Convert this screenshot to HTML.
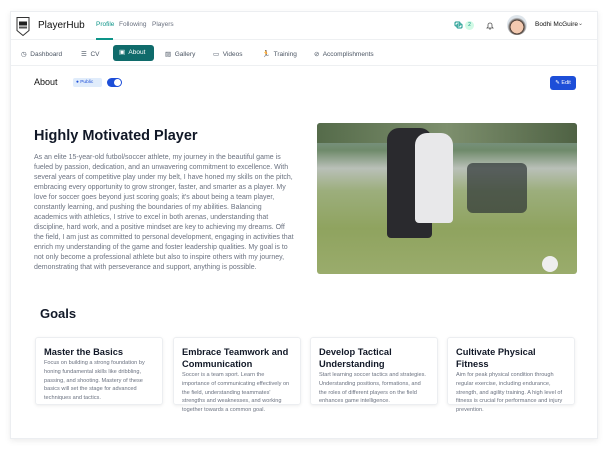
<!DOCTYPE html>
<html><head><meta charset="utf-8"><style>
*{box-sizing:border-box;margin:0;padding:0}
body{width:608px;height:450px;background:#fff;font-family:"Liberation Sans",sans-serif;position:relative;overflow:hidden;color:#111827}
.card{position:absolute;left:10px;top:11px;width:588px;height:428px;background:#fff;border:1px solid #eceef1;box-shadow:0 2px 6px rgba(0,0,0,.08)}
.a{position:absolute}
.hdr{left:0;top:0;width:586px;height:28px;border-bottom:1px solid #eef0f2}
.tabs{left:0;top:28px;width:586px;height:26px;border-bottom:1px solid #eef0f2}
.t{position:absolute;top:10px;font-size:6.5px;color:#4b5563}
p.body{position:absolute;left:23px;top:141px;width:260px;font-size:7px;line-height:10px;color:#6b7280}
.g{position:absolute;top:325px;width:128px;height:68px;border:1px solid #eceef1;border-radius:3px;box-shadow:0 1px 3px rgba(0,0,0,.07);padding:8px 8px}
.g h3{font-size:9.3px;line-height:12px;color:#111827;font-weight:bold;margin-bottom:1px}
.g div{font-size:5.6px;line-height:8.8px;color:#6b7280}
</style></head><body>
<div class="card">
<div class="a hdr">
 <svg class="a" style="left:5px;top:4px" width="14" height="21" viewBox="0 0 14 20"><path d="M1 1h12v13l-6 5-6-5z" fill="#fff" stroke="#333" stroke-width="1"/><rect x="3" y="5" width="8" height="4" fill="#222"/><rect x="3" y="10" width="8" height="2" fill="#555"/></svg>
 <div class="a" style="left:27px;top:8px;font-size:10px;color:#111">PlayerHub</div>
 <div class="a" style="left:85px;top:9px;font-size:6.5px;color:#0d9488">Profile</div>
 <div class="a" style="left:85px;top:26px;width:17px;height:2px;background:#0d9488"></div>
 <div class="a" style="left:108px;top:9px;font-size:6.5px;color:#6b7280">Following</div>
 <div class="a" style="left:141px;top:9px;font-size:6.5px;color:#6b7280">Players</div>
 <svg class="a" style="left:443px;top:9px" width="9" height="9" viewBox="0 0 9 9"><rect x="1" y="1" width="5" height="4" rx="1" fill="none" stroke="#0d9488"/><rect x="3" y="3" width="5" height="4" rx="1" fill="none" stroke="#0d9488"/></svg>
 <div class="a" style="left:454px;top:9px;width:9px;height:9px;border-radius:5px;background:#d1fae5;font-size:5px;color:#0d9488;text-align:center;line-height:9px">2</div>
 <svg class="a" style="left:475px;top:9px" width="8" height="9" viewBox="0 0 8 9"><path d="M2 6V4a2 2 0 014 0v2l1 1H1z M3 8h2" fill="none" stroke="#555" stroke-width=".8"/></svg>
 <div class="a" style="left:496px;top:3px;width:20px;height:20px;border-radius:50%;background:radial-gradient(circle at 50% 60%,#f2c9b0 40%,#3a2a20 42%,#dde4ea 60%)"></div>
 <div class="a" style="left:524px;top:9px;font-size:6.5px;color:#111">Bodhi McGuire</div>
 <div class="a" style="left:567px;top:8px;font-size:6px;color:#555">⌄</div>
</div>
<div class="a tabs">
 <div class="t" style="left:10px">◷&nbsp; Dashboard</div>
 <div class="t" style="left:70px">☰&nbsp; CV</div>
 <div class="a" style="left:102px;top:5px;width:41px;height:16px;background:#0f6b6b;border-radius:3px;color:#fff;font-size:6.5px;line-height:16px;padding-left:6px">▣&nbsp; About</div>
 <div class="t" style="left:154px">▨&nbsp; Gallery</div>
 <div class="t" style="left:202px">▭&nbsp; Videos</div>
 <div class="t" style="left:251px">🏃&nbsp; Training</div>
 <div class="t" style="left:303px">⊘&nbsp; Accomplishments</div>
</div>
<div class="a" style="left:23px;top:65px;font-size:9px;color:#111">About</div>
<div class="a" style="left:62px;top:66px;width:29px;height:9px;background:#e0ecfb;border-radius:2px;font-size:4.8px;color:#1d4ed8;line-height:9px;padding-left:3px">● Public</div>
<div class="a" style="left:96px;top:66px;width:15px;height:9px;background:#1d4ed8;border-radius:5px"><div class="a" style="left:7px;top:1px;width:7px;height:7px;border-radius:50%;background:#fff"></div></div>
<div class="a" style="left:539px;top:64px;width:26px;height:14px;background:#1d4ed8;border-radius:3px;color:#fff;font-size:5.5px;line-height:14px;text-align:center">✎ Edit</div>
<div class="a" style="left:23px;top:116px;font-size:14.5px;font-weight:bold;color:#111827">Highly Motivated Player</div>
<p class="body">As an elite 15-year-old futbol/soccer athlete, my journey in the beautiful game is fueled by passion, dedication, and an unwavering commitment to excellence. With several years of competitive play under my belt, I have honed my skills on the pitch, embracing every opportunity to grow stronger, faster, and smarter as a player. My love for soccer goes beyond just scoring goals; it's about being a team player, constantly learning, and pushing the boundaries of my abilities. Balancing academics with athletics, I strive to excel in both arenas, understanding that discipline, hard work, and a positive mindset are key to achieving my dreams. Off the field, I am just as committed to personal development, engaging in activities that enrich my understanding of the game and foster leadership qualities. My goal is to not only become a professional athlete but also to inspire others with my journey, demonstrating that with perseverance and support, anything is possible.</p>
<div class="a" style="left:306px;top:111px;width:260px;height:151px;border-radius:3px;overflow:hidden;background:linear-gradient(180deg,#8aa0a8 0%,#6f8a6a 18%,#b9c0b8 30%,#9cae7c 45%,#8fa35f 70%,#9aac6c 100%)">
 <div class="a" style="left:0;top:0;width:260px;height:20px;background:linear-gradient(90deg,#556b4a,#7d8f6d,#4f6244)"></div>
 <div class="a" style="left:70px;top:5px;width:45px;height:110px;background:#2a2a2e;border-radius:12px 12px 4px 4px"></div>
 <div class="a" style="left:98px;top:10px;width:38px;height:90px;background:#e8e8ea;border-radius:12px 12px 4px 4px"></div>
 <div class="a" style="left:150px;top:40px;width:60px;height:50px;background:#2d3436;border-radius:6px;opacity:.7"></div>
 <div class="a" style="left:225px;top:133px;width:16px;height:16px;border-radius:50%;background:#eee"></div>
</div>
<div class="a" style="left:29px;top:294px;font-size:13px;font-weight:bold;color:#111827">Goals</div>
<div class="g" style="left:24px"><h3>Master the Basics</h3><div>Focus on building a strong foundation by honing fundamental skills like dribbling, passing, and shooting. Mastery of these basics will set the stage for advanced techniques and tactics.</div></div>
<div class="g" style="left:162px"><h3>Embrace Teamwork and Communication</h3><div>Soccer is a team sport. Learn the importance of communicating effectively on the field, understanding teammates' strengths and weaknesses, and working together towards a common goal.</div></div>
<div class="g" style="left:299px"><h3>Develop Tactical Understanding</h3><div>Start learning soccer tactics and strategies. Understanding positions, formations, and the roles of different players on the field enhances game intelligence.</div></div>
<div class="g" style="left:436px"><h3>Cultivate Physical<br>Fitness</h3><div>Aim for peak physical condition through regular exercise, including endurance, strength, and agility training. A high level of fitness is crucial for performance and injury prevention.</div></div>
</div>
</body></html>
